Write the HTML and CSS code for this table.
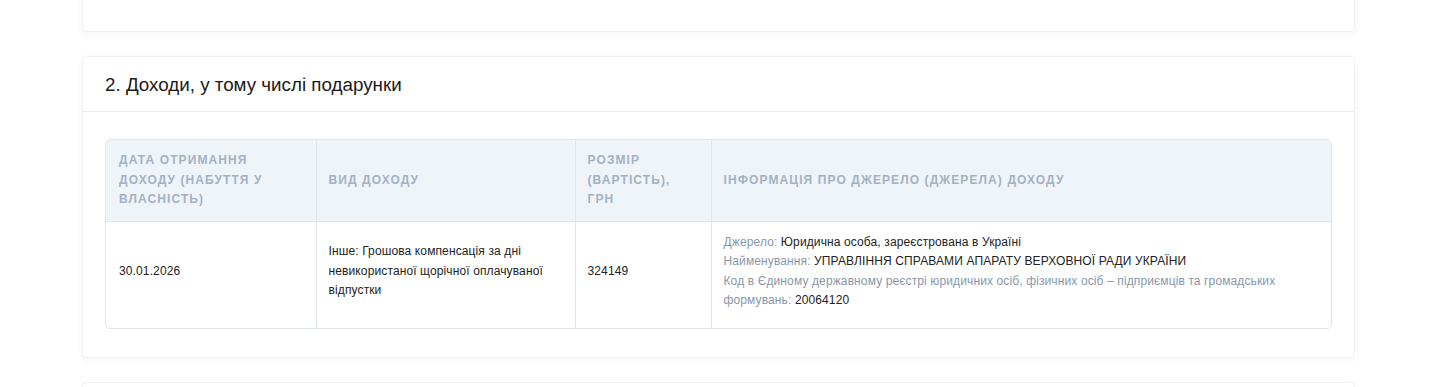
FILE: index.html
```html
<!DOCTYPE html>
<html lang="uk">
<head>
<meta charset="utf-8">
<title>Доходи</title>
<link rel="stylesheet" href="styles.css">
</head>
<body>
<div class="page">
  <section class="card card-prev"></section>
  <section class="card">
    <header class="card-head">
      <h2 class="card-title">2. Доходи, у тому числі подарунки</h2>
    </header>
    <div class="card-body">
      <div class="table-wrap">
        <table class="data">
          <colgroup>
            <col class="c1"><col class="c2"><col class="c3"><col class="c4">
          </colgroup>
          <thead>
            <tr>
              <th>Дата отримання доходу (набуття у власність)</th>
              <th>Вид доходу</th>
              <th>Розмір (вартість), грн</th>
              <th>Інформація про джерело (джерела) доходу</th>
            </tr>
          </thead>
          <tbody>
            <tr>
              <td>30.01.2026</td>
              <td>Інше: Грошова компенсація за дні невикористаної щорічної оплачуваної відпустки</td>
              <td>324149</td>
              <td>
                <div><span class="lbl">Джерело:</span> Юридична особа, зареєстрована в Україні</div>
                <div><span class="lbl">Найменування:</span> УПРАВЛІННЯ СПРАВАМИ АПАРАТУ ВЕРХОВНОЇ РАДИ УКРАЇНИ</div>
                <div><span class="lbl">Код в Єдиному державному реєстрі юридичних осіб, фізичних осіб – підприємців та громадських формувань:</span> 20064120</div>
              </td>
            </tr>
          </tbody>
        </table>
      </div>
    </div>
  </section>
  <section class="card card-next"></section>
</div>
</body>
</html>
```
FILE: styles.css
```css
html, body {
  margin: 0;
  padding: 0;
  background: #ffffff;
}
body {
  font-family: "Liberation Sans", Arial, sans-serif;
  color: #1f2328;
  overflow: hidden;
  height: 387px;
}
.page {
  width: 1273px;
  margin: 0 0 0 82px;
  display: flex;
  flex-direction: column;
  gap: 24px;
}
.card {
  background: #fff;
  border: 1px solid #f0f1f3;
  border-radius: 4px;
  box-shadow: 0 2px 8px rgba(30, 50, 80, 0.045);
}
.card-prev {
  height: 61px;
  margin-top: -30px;
  border-top: none;
}
.card-next {
  height: 60px;
}
.card-head {
  padding: 0 22px;
  height: 54px;
  display: flex;
  align-items: center;
  border-bottom: 1px solid #e8ebee;
}
.card-title {
  margin: 0;
  font-size: 18.8px;
  font-weight: 400;
  color: #1a1a1a;
  padding-top: 1px;
}
.card-body {
  padding: 27px 22px 28px 22px;
}
.table-wrap {
  border: 1px solid #dfe5eb;
  border-radius: 5px;
  overflow: hidden;
}
.data {
  width: 100%;
  border-collapse: collapse;
  table-layout: fixed;
}
.c1 { width: 210px; }
.c2 { width: 259px; }
.c3 { width: 136px; }
.data th {
  background: #eff4f8;
  color: #a3b2c3;
  font-size: 12px;
  font-weight: 700;
  text-transform: uppercase;
  letter-spacing: 1.1px;
  text-align: left;
  line-height: 19.5px;
  padding: 11px 11px 11px 12px;
  border-bottom: 1px solid #dfe5eb;
  vertical-align: middle;
}
.data td {
  font-size: 12px;
  line-height: 19.5px;
  letter-spacing: 0.12px;
  color: #222;
  padding: 11px 11px 17px 12px;
  vertical-align: middle;
}
.data th + th,
.data td + td {
  border-left: 1px solid #dfe5eb;
}
.data th:first-child,
.data td:first-child {
  padding-left: 13px;
}
.lbl {
  color: #8797ab;
}
```
